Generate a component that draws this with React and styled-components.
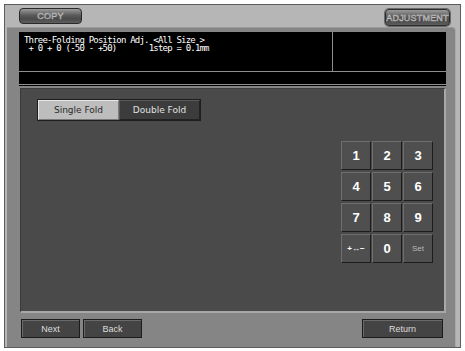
import React from 'react'
import styled, { createGlobalStyle } from 'styled-components'

const Global = createGlobalStyle`
  *, *::before, *::after {
    box-sizing: border-box;
  }
  body {
    margin: 0;
    background: #ffffff;
    font-family: "DejaVu Sans", sans-serif;
  }
`

const Screen = styled.div`
  margin: 4px 0 0 4px;
  width: 457px;
  height: 344px;
  border: 1px solid #5c5c5c;
  background: #b6b6b6;
  display: flex;
  flex-direction: column;
`

const TopBar = styled.div`
  height: 22px;
  display: flex;
  align-items: flex-start;
  justify-content: space-between;
  padding: 3px 10px 0 14px;
`

const PillButton = styled.div`
  position: relative;
  z-index: 1;
  height: ${p => p.$h}px;
  width: ${p => p.$w}px;
  margin-top: ${p => p.$top || 0}px;
  border-radius: 4px;
  border: 1px solid #2a2a2a;
  background: linear-gradient(#9a9a9a, #5a5a5a 45%, #4a4a4a 70%, #5e5e5e);
  box-shadow: ${p => (p.$ring ? '0 0 0 1px #6a6a6a' : 'none')};
  display: flex;
  align-items: center;
  justify-content: center;
  font-family: "Liberation Sans", sans-serif;
  font-size: 9px;
  letter-spacing: 0.2px;
  color: #6a6a6a;
  -webkit-text-stroke: 0.5px #c0c0c0;
`

const Body = styled.div`
  flex: 1;
  background: #858585;
  border-top: 1px solid #9a9a9a;
  border-right: 1px solid #a8a8a8;
  margin: 0 4px 0 2px;
  border-radius: 0 4px 0 0;
  display: flex;
  flex-direction: column;
  padding: 4px 9px 0 12px;
`

const Display = styled.div`
  background: #000;
  height: 54px;
  display: flex;
  flex-direction: column;
`

const DisplayTop = styled.div`
  height: 40px;
  display: flex;
  border-bottom: 1px solid #8f8f8f;
`

const Message = styled.div`
  flex: 1;
  padding: 4px 0 0 5px;
  color: #fff;
  font-family: "DejaVu Sans Mono", monospace;
  font-size: 9px;
  letter-spacing: -0.8px;
  line-height: 8px;
  white-space: pre;
  border-right: 1px solid #8f8f8f;
`

const Side = styled.div`
  width: 113px;
`

const DisplayStrip = styled.div`
  height: 13px;
  border-bottom: 1px solid #8f8f8f;
`

const Panel = styled.div`
  margin: 2px 0 0 1px;
  height: 225px;
  background: #4a4a4a;
  border-top: 1px solid #3a3a3a;
  border-left: 1px solid #3a3a3a;
  border-right: 2px solid #a8a8a8;
  border-bottom: 2px solid #a8a8a8;
  display: flex;
  flex-direction: column;
  padding: 10px 11px 0 16px;
`

const Segments = styled.div`
  display: flex;
  width: max-content;
  border: 1px solid #1e1e1e;
`

const Segment = styled.div`
  width: 81px;
  height: 20px;
  display: flex;
  align-items: center;
  justify-content: center;
  font-size: 9px;
  background: ${p => (p.$active ? '#bdbdbd' : '#3c3c3c')};
  color: ${p => (p.$active ? '#2a2a2a' : '#e0e0e0')};
  border: 1px solid ${p => (p.$active ? '#e6e6e6' : '#5a5a5a')};
  border-right-color: ${p => (p.$active ? '#7a7a7a' : '#222')};
  border-bottom-color: ${p => (p.$active ? '#7a7a7a' : '#222')};
`

const Keypad = styled.div`
  margin: 20px 0 0 auto;
  display: grid;
  grid-template-columns: repeat(3, 30px);
  grid-auto-rows: 29px;
  gap: 2px 1px;
`

const Key = styled.div`
  background: #4f4f4f;
  border: 1px solid #6e6e6e;
  border-right-color: #1c1c1c;
  border-bottom-color: #1c1c1c;
  display: flex;
  align-items: center;
  justify-content: center;
  font-family: "Liberation Sans", sans-serif;
  font-size: ${p => (p.$small ? '8px' : '13px')};
  color: ${p => (p.$dim ? '#b8b8b8' : '#ffffff')};
  font-weight: ${p => (p.$dim ? 'normal' : 'bold')};
`

const Footer = styled.div`
  display: flex;
  align-items: center;
  gap: 3px;
  padding: 6px 3px 0 2px;
`

const FootButton = styled.div`
  width: ${p => p.$w}px;
  height: 19px;
  margin-left: ${p => (p.$push ? 'auto' : '0')};
  background: #444;
  border: 1px solid #1c1c1c;
  box-shadow: inset 1px 1px 0 #6a6a6a;
  display: flex;
  align-items: center;
  justify-content: center;
  font-family: "Liberation Sans", sans-serif;
  font-size: 9px;
  color: #dcdcdc;
`

const keys = ['1', '2', '3', '4', '5', '6', '7', '8', '9']

export default function App() {
  return (
    <>
      <Global />
      <Screen>
        <TopBar>
          <PillButton $w={63} $h={16}>COPY</PillButton>
          <PillButton $w={65} $h={17} $top={1} $ring>ADJUSTMENT</PillButton>
        </TopBar>
        <Body>
          <Display>
            <DisplayTop>
              <Message>{'Three-Folding Position Adj. <All Size >\n + 0 + 0 (-50 - +50)       1step = 0.1mm'}</Message>
              <Side />
            </DisplayTop>
            <DisplayStrip />
          </Display>
          <Panel>
            <Segments>
              <Segment $active>Single Fold</Segment>
              <Segment>Double Fold</Segment>
            </Segments>
            <Keypad>
              {keys.map(k => <Key key={k}>{k}</Key>)}
              <Key $small>+↔−</Key>
              <Key>0</Key>
              <Key $small $dim>Set</Key>
            </Keypad>
          </Panel>
          <Footer>
            <FootButton $w={59}>Next</FootButton>
            <FootButton $w={59}>Back</FootButton>
            <FootButton $w={81} $push>Return</FootButton>
          </Footer>
        </Body>
      </Screen>
    </>
  )
}
